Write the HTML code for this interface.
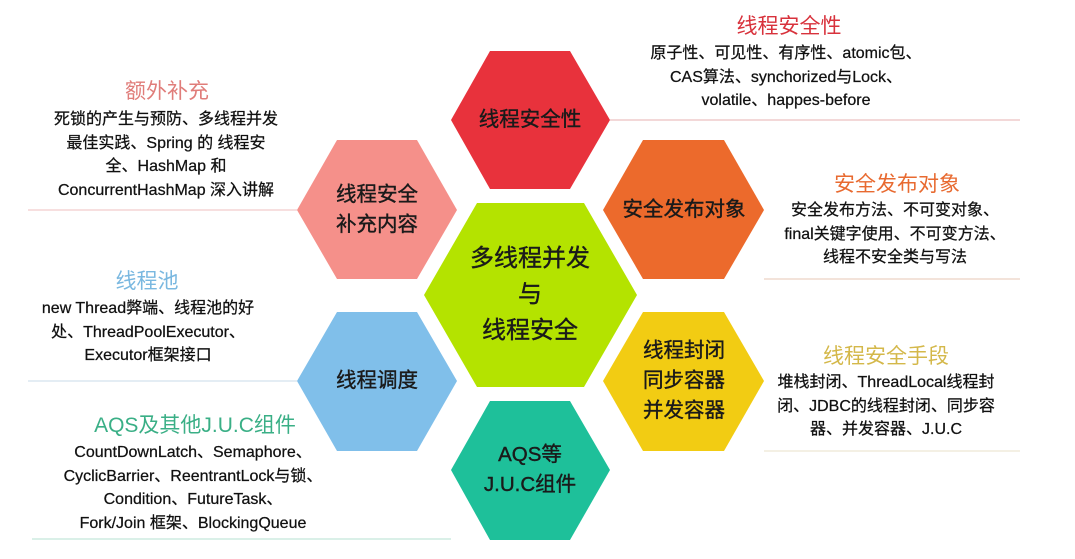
<!DOCTYPE html>
<html><head><meta charset="utf-8"><style>
body{margin:0;width:1075px;height:559px;background:#fff;position:relative;overflow:hidden;font-family:"Liberation Sans","Noto Sans CJK SC",sans-serif;color:#111}
.t{position:absolute;text-align:center;white-space:nowrap;transform:translateX(-50%);font-size:16px;line-height:23.5px;-webkit-text-stroke:0.25px #111}
.h{position:absolute;white-space:nowrap;transform:translate(-50%,-50%);font-size:21px}
.x{position:absolute;white-space:nowrap;transform:translate(-50%,-50%);text-align:center;font-size:20.5px;line-height:30px;color:#1a1a1a;-webkit-text-stroke:0.4px #1a1a1a}
</style></head><body>
<svg width="1075" height="559" style="position:absolute;left:0;top:0">
<g stroke-width="1.2">
<line x1="610" y1="120" x2="1020" y2="120" stroke="#ecc0c0"/>
<line x1="764" y1="279" x2="1020" y2="279" stroke="#ecd2c4"/>
<line x1="764" y1="451" x2="1020" y2="451" stroke="#eee8d4"/>
<line x1="28" y1="210" x2="297" y2="210" stroke="#f2cccc"/>
<line x1="28" y1="381" x2="297" y2="381" stroke="#d4e2ee"/>
<line x1="32" y1="539" x2="451" y2="539" stroke="#c4e6da"/>
</g>
<polygon points="490,51 570,51 610,120 570,189 490,189 451,120" fill="#e8323c"/>
<polygon points="337,140 417,140 457,210 417,279 337,279 297,210" fill="#f5908a"/>
<polygon points="643,140 724,140 764,210 724,279 643,279 603,210" fill="#ec6a2c"/>
<polygon points="477,203 584,203 637,295 584,387 477,387 424,295" fill="#b4e300"/>
<polygon points="337,312 417,312 457,381 417,451 337,451 297,381" fill="#80bfea"/>
<polygon points="643,312 724,312 764,381 724,451 643,451 603,381" fill="#f2cc13"/>
<polygon points="490,401 570,401 610,470 570,540 490,540 451,470" fill="#1ec09a"/>
</svg>
<div class="x" style="left:530px;top:120px">线程安全性</div>
<div class="x" style="left:377px;top:210px">线程安全<br>补充内容</div>
<div class="x" style="left:684px;top:210px">安全发布对象</div>
<div class="x" style="left:530px;top:295px;font-size:24px;line-height:36px">多线程并发<br>与<br>线程安全</div>
<div class="x" style="left:377px;top:381px">线程调度</div>
<div class="x" style="left:684px;top:381px">线程封闭<br>同步容器<br>并发容器</div>
<div class="x" style="left:530px;top:470px">AQS等<br>J.U.C组件</div>

<div class="h" style="left:167px;top:90px;color:#e07d7a">额外补充</div>
<div class="t" style="left:166px;top:108px">死锁的产生与预防、多线程并发<br>最佳实践、Spring 的 线程安<br>全、HashMap 和<br>ConcurrentHashMap 深入讲解</div>
<div class="h" style="left:147px;top:280px;color:#7ab8e0">线程池</div>
<div class="t" style="left:148px;top:297px">new Thread弊端、线程池的好<br>处、ThreadPoolExecutor、<br>Executor框架接口</div>
<div class="h" style="left:195px;top:424px;color:#3aaf86">AQS及其他J.U.C组件</div>
<div class="t" style="left:193px;top:441px">CountDownLatch、Semaphore、<br>CyclicBarrier、ReentrantLock与锁、<br>Condition、FutureTask、<br>Fork/Join 框架、BlockingQueue</div>

<div class="h" style="left:789px;top:25px;color:#d8323c">线程安全性</div>
<div class="t" style="left:786px;top:42px">原子性、可见性、有序性、atomic包、<br>CAS算法、synchorized与Lock、<br>volatile、happes-before</div>
<div class="h" style="left:897px;top:183px;color:#e86a30">安全发布对象</div>
<div class="t" style="left:895px;top:199px">安全发布方法、不可变对象、<br>final关键字使用、不可变方法、<br>线程不安全类与写法</div>
<div class="h" style="left:886px;top:355px;color:#d4b84a">线程安全手段</div>
<div class="t" style="left:886px;top:371px">堆栈封闭、ThreadLocal线程封<br>闭、JDBC的线程封闭、同步容<br>器、并发容器、J.U.C</div>
</body></html>
